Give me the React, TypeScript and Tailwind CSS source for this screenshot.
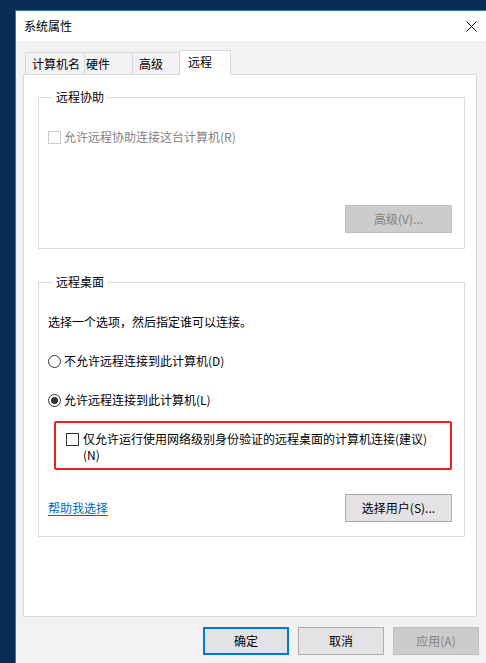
import React from "react";

const font = "font-['Microsoft_YaHei_UI','Noto_Sans_CJK_SC',sans-serif]";

function Checkbox({ disabled = false }: { disabled?: boolean }) {
  return (
    <span
      className={`block h-[13px] w-[13px] shrink-0 border bg-white ${
        disabled ? "border-[#cccccc]" : "border-[#333333]"
      }`}
    />
  );
}

function Radio({ checked = false }: { checked?: boolean }) {
  return (
    <span className="flex h-[13px] w-[13px] shrink-0 items-center justify-center rounded-full border border-[#333333] bg-white">
      {checked && <span className="h-[7px] w-[7px] rounded-full bg-[#333333]" />}
    </span>
  );
}

function Btn({
  children,
  disabled = false,
  primary = false,
  className = "",
}: {
  children: React.ReactNode;
  disabled?: boolean;
  primary?: boolean;
  className?: string;
}) {
  const look = disabled
    ? "border border-[#bfbfbf] bg-[#cccccc] text-[#838383]"
    : primary
      ? "border-2 border-[#0078d7] bg-[#e5e2e5] text-black"
      : "border border-[#adadad] bg-[#e5e2e5] text-black";
  return (
    <div className={`flex h-[28px] items-center justify-center text-[12px] ${look} ${className}`}>
      {children}
    </div>
  );
}

function Group({
  title,
  children,
  className = "",
}: {
  title: string;
  children: React.ReactNode;
  className?: string;
}) {
  return (
    <fieldset className={`ml-[14px] w-[427px] border border-[#dcdcdc] px-[9px] ${className}`}>
      <legend className="ml-[5px] px-[3px] text-[12px] leading-[16px] text-black">{title}</legend>
      {children}
    </fieldset>
  );
}

const tabs = [
  { label: "计算机名", cls: "w-[59px] pl-[6px]" },
  { label: "硬件", cls: "w-[48px] pl-[1px]" },
  { label: "高级", cls: "w-[47px] pl-[6px]" },
];

export default function App() {
  return (
    <div className={`h-[663px] w-[486px] overflow-hidden bg-[#082d52] pl-[15px] pt-[10px] ${font}`}>
      <div className="w-[480px] border-l border-t border-[#1a7fd4] bg-[#f4f1f4]">
        {/* title bar */}
        <div className="flex h-[30px] items-center justify-between bg-white">
          <span className="pl-[8px] text-[12px] text-black">系统属性</span>
          <svg width="11" height="11" viewBox="0 0 11 11" className="mr-[18px]">
            <path d="M0.5 0.5 L10.5 10.5 M10.5 0.5 L0.5 10.5" stroke="#111" strokeWidth="1" />
          </svg>
        </div>

        <div className="pt-[9px]">
          {/* tab strip */}
          <div className="relative z-10 ml-[9px] flex items-end">
            {tabs.map((t) => (
              <div
                key={t.label}
                className={`flex h-[22px] items-center border-l border-t border-[#d9d9d9] bg-[#f4f1f4] text-[12px] text-black ${t.cls}`}
              >
                {t.label}
              </div>
            ))}
            <div className="-mb-px flex h-[25px] w-[52px] items-center border-x border-t border-[#d9d9d9] bg-white pb-[2px] pl-[8px] text-[12px] text-black">
              远程
            </div>
          </div>

          {/* tab panel */}
          <div className="ml-[7px] h-[543px] w-[454px] border border-[#d9d9d9] bg-white pt-[14px]">
            <Group title="远程协助" className="pb-[15px]">
              <div className="mt-[24px] flex items-center gap-[3px] text-[12px] leading-[16px] text-[#838383]">
                <Checkbox disabled />
                <span>允许远程协助连接这台计算机(R)</span>
              </div>
              <div className="mt-[60px] flex justify-end pr-[3px]">
                <Btn disabled className="w-[107px]">
                  高级(V)...
                </Btn>
              </div>
            </Group>

            <Group title="远程桌面" className="mt-[25px] pb-[14px]">
              <p className="mt-[24px] text-[12px] leading-[16px] text-black">
                选择一个选项，然后指定谁可以连接。
              </p>
              <div className="mt-[23px] flex items-center gap-[3px] text-[12px] leading-[16px] text-black">
                <Radio />
                <span>不允许远程连接到此计算机(D)</span>
              </div>
              <div className="mt-[23px] flex items-center gap-[3px] text-[12px] leading-[16px] text-black">
                <Radio checked />
                <span>允许远程连接到此计算机(L)</span>
              </div>
              <div className="ml-[6px] mt-[13px] flex w-[398px] items-start gap-[4px] rounded-[2px] border-2 border-[#e8201e] pb-[5px] pl-[10px] pt-[8px]">
                <span className="mt-[2px] flex">
                  <Checkbox />
                </span>
                <span className="w-[352px] text-[12px] leading-[16px] text-black">
                  仅允许运行使用网络级别身份验证的远程桌面的计算机连接(建议)(N)
                </span>
              </div>
              <div className="mt-[24px] flex items-center justify-between pr-[3px]">
                <a className="text-[12px] leading-[16px] text-[#0066cc] underline underline-offset-2">
                  帮助我选择
                </a>
                <Btn className="w-[107px]">选择用户(S)...</Btn>
              </div>
            </Group>
          </div>

          {/* dialog buttons */}
          <div className="mt-[10px] flex justify-end gap-[9px] pb-[20px] pr-[16px]">
            <Btn primary className="w-[86px]">
              确定
            </Btn>
            <Btn className="w-[86px]">取消</Btn>
            <Btn disabled className="w-[86px]">
              应用(A)
            </Btn>
          </div>
        </div>
      </div>
    </div>
  );
}
